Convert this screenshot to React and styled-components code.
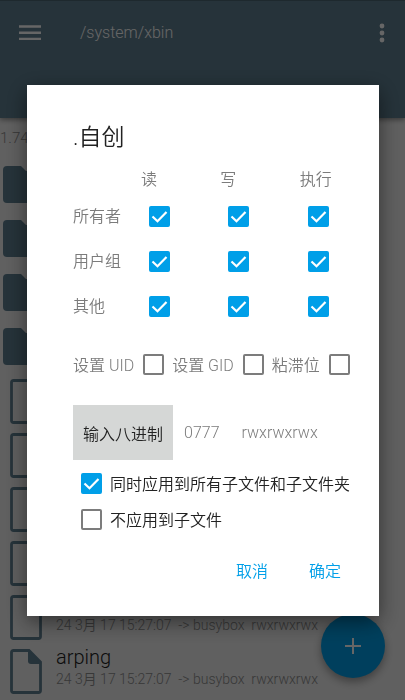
import { useState } from "react";
import styled, { createGlobalStyle } from "styled-components";

const GlobalStyle = createGlobalStyle`
* {
    box-sizing: border-box;
}
body {
    margin: 0;
    background-color: #f0f0f0;
    font-family: Roboto, "Noto Sans CJK SC", sans-serif;
    font-weight: 350;
}
button, input {
    font: inherit;
}
`

const meta = "24 3月 17 15:27:07  -> busybox  rwxrwxrwx";

const files = [
    { type: "folder" },
    { type: "folder" },
    { type: "folder" },
    { type: "folder" },
    { type: "file" },
    { type: "file" },
    { type: "file" },
    { type: "file" },
    { type: "file", meta },
    { type: "file", name: "arping", meta },
];

const columns = ["读", "写", "执行"];
const owners = ["所有者", "用户组", "其他"];
const flags = ["设置 UID", "设置 GID", "粘滞位"];

const FolderIcon = () => (
    <svg width="46" height="37" viewBox="0 0 46 37" fill="#5f7f91" aria-hidden="true">
        <path d="M4 0H18L23 5H42Q46 5 46 9V33Q46 37 42 37H4Q0 37 0 33V4Q0 0 4 0Z" />
    </svg>
);

const FileIcon = () => (
    <svg width="32" height="45" viewBox="0 0 32 45" aria-hidden="true">
        <path d="M3.5 1.5H19L30.5 13V41.5Q30.5 43.5 28.5 43.5H3.5Q1.5 43.5 1.5 41.5V3.5Q1.5 1.5 3.5 1.5Z" fill="none" stroke="#5f7f91" strokeWidth="2.8" />
        <path d="M18 1L31 14V15H21Q18 15 18 12Z" fill="#5f7f91" />
    </svg>
);

const Checkbox = ({ id, label, defaultChecked = false }) => {
    const [checked, setChecked] = useState(defaultChecked);

    return (
        <Box>
            <BoxInput
                id={id}
                type="checkbox"
                aria-label={label}
                checked={checked}
                onChange={(e) => setChecked(e.target.checked)}
            />
            {checked &&
            <Tick viewBox="0 0 21 21" aria-hidden="true">
                <path d="M3.5 10.5L8.5 15.2L17.5 6" fill="none" stroke="#fff" strokeWidth="2.2" />
            </Tick>
            }
        </Box>
    );
};

const App = () => {
    return (
        <>
        <GlobalStyle />
        <Page>
            <Header>
                <IconButton aria-label="菜单">
                    <svg width="22" height="16" viewBox="0 0 22 16" fill="#fff">
                        <path d="M0 0.3H22V2.7H0ZM0 6.5H22V8.9H0ZM0 12.7H22V15.1H0Z" />
                    </svg>
                </IconButton>
                <Path>/system/xbin</Path>
                <IconButton aria-label="更多">
                    <svg width="6" height="20" viewBox="0 0 6 20" fill="#fff">
                        <circle cx="3" cy="3" r="2.4" />
                        <circle cx="3" cy="10" r="2.4" />
                        <circle cx="3" cy="17" r="2.4" />
                    </svg>
                </IconButton>
            </Header>
            <Space>1.74</Space>
            <List>
                {files.map((file, index) => (
                    <Row key={index} $folder={file.type === "folder"}>
                        {file.type === "folder" ? <FolderIcon /> : <FileIcon />}
                        <RowText>
                            <Name>{file.name}</Name>
                            <Meta>{file.meta}</Meta>
                        </RowText>
                    </Row>
                ))}
            </List>
            <AddButton aria-label="添加">
                <svg width="18" height="18" viewBox="0 0 18 18" stroke="#fff" strokeWidth="2">
                    <path d="M9 1V17M1 9H17" />
                </svg>
            </AddButton>
        </Page>
        <Scrim>
            <Dialog role="dialog" aria-modal="true" aria-labelledby="title">
                <Title id="title">.自创</Title>
                <Permissions>
                    <thead>
                        <tr>
                            <Corner />
                            {columns.map((column) => (
                                <ColumnHead key={column} scope="col">{column}</ColumnHead>
                            ))}
                        </tr>
                    </thead>
                    <tbody>
                        {owners.map((owner) => (
                            <tr key={owner}>
                                <LabelCell scope="row">{owner}</LabelCell>
                                {columns.map((column) => (
                                    <CheckCell key={column}>
                                        <Checkbox label={owner + column} defaultChecked />
                                    </CheckCell>
                                ))}
                            </tr>
                        ))}
                    </tbody>
                </Permissions>
                <Flags>
                    {flags.map((flag, index) => (
                        <Flag key={flag} htmlFor={"flag" + index}>
                            {flag}
                            <Checkbox id={"flag" + index} />
                        </Flag>
                    ))}
                </Flags>
                <Octal>
                    <OctalButton>输入八进制</OctalButton>
                    <Value>0777</Value>
                    <Value>rwxrwxrwx</Value>
                </Octal>
                <Options>
                    <Option htmlFor="recursive">
                        <Checkbox id="recursive" defaultChecked />
                        同时应用到所有子文件和子文件夹
                    </Option>
                    <Option htmlFor="skip">
                        <Checkbox id="skip" />
                        不应用到子文件
                    </Option>
                </Options>
                <Actions>
                    <Action>取消</Action>
                    <Action>确定</Action>
                </Actions>
            </Dialog>
        </Scrim>
        </>
    );
};

const Page = styled.div`
position: relative;
min-height: 100vh;
`
const Header = styled.header`
display: flex;
align-items: flex-start;
height: 118px;
padding: 16px 12px;
border-top: 1px solid #4c6674;
background-color: #5f7f91;
box-shadow: 0 2px 5px rgba(0, 0, 0, 0.4);
`
const IconButton = styled.button`
display: flex;
align-items: center;
justify-content: center;
height: 32px;
min-width: 22px;
padding: 0 7px;
border: 0;
background: none;
`
const Path = styled.div`
flex: 1;
padding-left: 32px;
line-height: 32px;
font-size: 16px;
color: #fff;
`
const Space = styled.div`
height: 39px;
line-height: 40px;
font-size: 15px;
color: #8c8c8c;
`
const List = styled.ul`
margin: 0;
padding: 0;
list-style: none;
`
const Row = styled.li`
display: flex;
align-items: center;
gap: 14px;
height: 54px;
padding: ${(props) => (props.$folder ? "0 0 0 3px" : "3px 0 0 10px")};
`
const RowText = styled.div`
display: flex;
flex-direction: column;
padding-bottom: 10px;
white-space: pre;
`
const Name = styled.div`
height: 24px;
line-height: 24px;
font-size: 20px;
color: #222;
`
const Meta = styled.div`
height: 20px;
line-height: 20px;
font-size: 14px;
color: #8c8c8c;
`
const AddButton = styled.button`
position: absolute;
right: 20px;
bottom: 22px;
display: flex;
align-items: center;
justify-content: center;
width: 64px;
height: 64px;
padding: 0;
border: 0;
border-radius: 50%;
background-color: #009fe8;
box-shadow: 0 4px 8px rgba(0, 0, 0, 0.35);
`
const Scrim = styled.div`
position: fixed;
inset: 0;
display: flex;
align-items: center;
justify-content: center;
padding: 1px 26px 0 27px;
background-color: rgba(0, 0, 0, 0.6);
`
const Dialog = styled.div`
width: 100%;
padding: 37px 0 30px 46px;
background-color: #fff;
box-shadow: 0 6px 20px rgba(0, 0, 0, 0.5);
font-size: 16px;
color: #7c7c7c;
`
const Title = styled.h1`
margin: 0;
line-height: 32px;
font-size: 23px;
font-weight: 350;
color: #222;
`
const Permissions = styled.table`
width: 100%;
margin-top: 11px;
table-layout: fixed;
border-collapse: collapse;
`
const Corner = styled.td`
width: 68px;
padding: 0;
`
const LabelCell = styled.th`
height: 45px;
padding: 0 0 3px;
text-align: left;
font-weight: 350;
white-space: nowrap;
`
const ColumnHead = styled.th`
height: 29px;
padding: 0 0 3px;
text-align: left;
font-weight: 350;
`
const CheckCell = styled.td`
padding: 0 0 0 8px;
`
const Box = styled.span`
display: inline-grid;
width: 21px;
height: 21px;
vertical-align: middle;
`
const BoxInput = styled.input`
grid-area: 1 / 1;
appearance: none;
width: 21px;
height: 21px;
margin: 0;
border: 2px solid #7c7c7c;
border-radius: 2px;
&:checked {
    border-color: #009fe8;
    background-color: #009fe8;
}
`
const Tick = styled.svg`
grid-area: 1 / 1;
width: 21px;
height: 21px;
pointer-events: none;
`
const Flags = styled.div`
display: flex;
gap: 8px;
margin-top: 14px;
`
const Flag = styled.label`
display: flex;
align-items: center;
gap: 9px;
height: 42px;
white-space: nowrap;
`
const Octal = styled.div`
display: flex;
align-items: center;
margin-top: 20px;
`
const OctalButton = styled.button`
height: 55px;
padding: 0 10px;
border: 0;
background-color: #d5d7d6;
color: #222;
`
const Value = styled.span`
margin-left: 11px;
& + & {
    margin-left: 22px;
}
`
const Options = styled.div`
display: flex;
flex-direction: column;
gap: 12px;
margin-top: 11px;
padding-left: 8px;
`
const Option = styled.label`
display: flex;
align-items: center;
gap: 8px;
height: 24px;
color: #222;
white-space: nowrap;
`
const Actions = styled.div`
display: flex;
justify-content: flex-end;
gap: 25px;
margin-top: 23px;
padding-right: 30px;
`
const Action = styled.button`
height: 32px;
padding: 0 8px;
border: 0;
background: none;
color: #009fe8;
`

export default App;
